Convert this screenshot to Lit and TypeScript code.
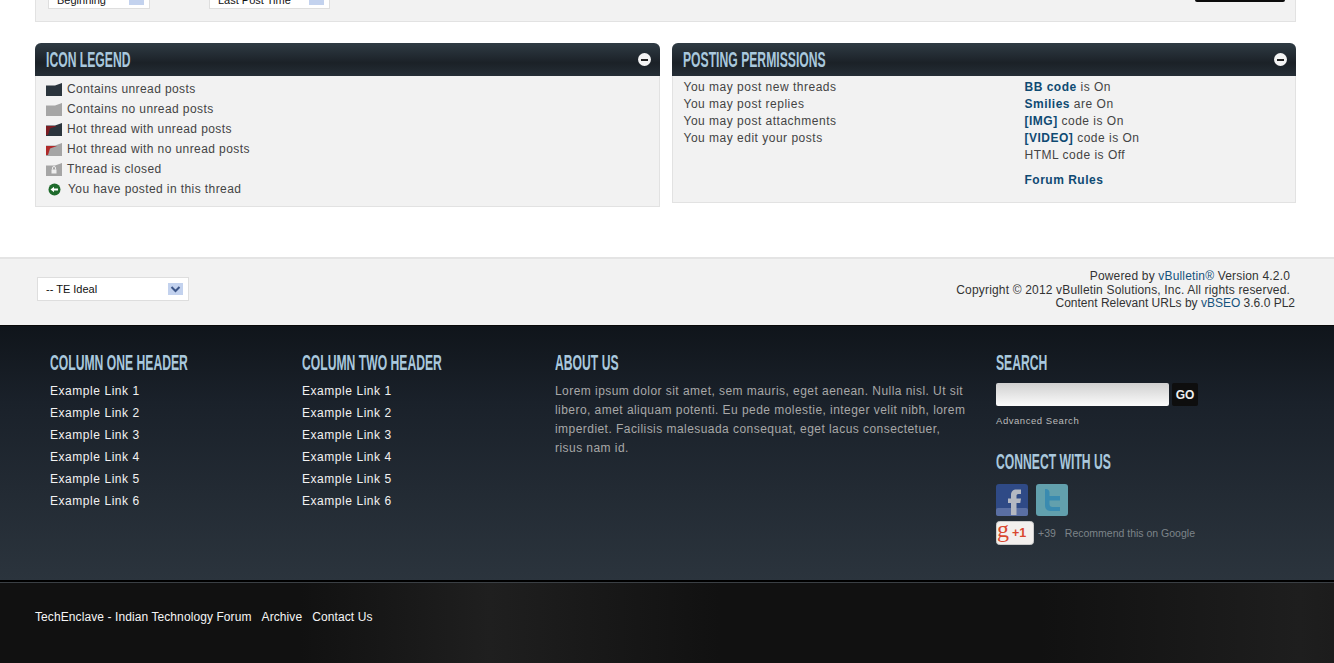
import { LitElement, html, css, svg } from "lit";
import { customElement } from "lit/decorators.js";

const folder = (body: string, hot: string, lock = false) => html`<svg class="fi" width="16" height="13" viewBox="0 0 16 13">
  <path d="M0 2.500H9L16 0V13H0Z" fill=${body}/>
  ${hot ? svg`<path d="M0 3H11L4 5.500 2 12H0Z" fill=${hot}/>` : ""}
  ${lock ? svg`<rect x="5.500" y="6.500" width="5" height="4" fill="#eee"/><path d="M6.500 6.500V5a1.500 1.500 0 0 1 3 0V6.500" fill="none" stroke="#eee" stroke-width="1"/>` : ""}
</svg>`;

@customElement("app-root")
export class AppRoot extends LitElement {
  static styles = css`
    :host { display: block; background: #fff; height: 663px; overflow: hidden; font-family: "Liberation Sans", Arial, sans-serif; font-size: 12px; color: #333; }
    a { text-decoration: none; }
    .top { margin: 0 38px 0 35px; height: 22px; box-sizing: border-box; background: #f2f2f2; border: 1px solid #e2e2e2; border-top: 0; position: relative; display: flex; overflow: hidden; padding-left: 12px; }
    .mini { height: 9px; background: #fff; border: 1px solid #dedede; border-top: 0; box-sizing: border-box; display: flex; justify-content: space-between; overflow: hidden; padding: 0 5px 0 8px; font-size: 11px; line-height: 1px; color: #111; }
    .mini.a { width: 102px; margin-right: 59px; }
    .mini.b { width: 121px; }
    .mini i { display: block; width: 15px; height: 5px; background: #c3d2ee; }
    .blk { position: absolute; right: 10px; top: 0; width: 90px; height: 2px; background: #0c0c0c; border-radius: 0 0 3px 3px; }
    .panels { display: flex; align-items: flex-start; gap: 12px; margin: 21px 38px 0 35px; }
    .panel { flex: 1; box-sizing: border-box; background: #f2f2f2; border: 1px solid #e2e2e2; border-top: 0; border-radius: 6px 6px 0 0; }
    .panel.l { height: 164px; }
    .panel.r { height: 160px; }
    .ph { margin: 0 -1px; height: 33px; display: flex; align-items: center; justify-content: space-between; padding: 0 9px 0 11px; background: linear-gradient(#2f3b44, #1b2127 60%, #252e36); border-radius: 6px 6px 0 0; }
    .h { display: inline-block; font-weight: 700; color: #a9c8dd; text-transform: uppercase; font-size: 22px; line-height: 24px; white-space: nowrap; transform: scaleX(0.553); transform-origin: left center; }
    .hw { display: block; height: 24px; overflow: visible; }
    .coll { width: 13px; height: 13px; border-radius: 50%; background: #f4f4f4; display: flex; align-items: center; justify-content: center; }
    .coll b { display: block; width: 7px; height: 2px; background: #222; }
    .leg { padding: 3px 10px; }
    .leg div { height: 20px; display: flex; align-items: center; gap: 5px; letter-spacing: 0.41px; color: #444; }
    .fi { flex: none; }
    .perm { display: grid; grid-template-columns: 341px 1fr; padding: 3px 11px; line-height: 17px; letter-spacing: 0.5px; color: #444; }
    .perm a { color: #0f4a72; font-weight: 700; }
    .rules { margin-top: 8px; }
    .band { margin-top: 50px; height: 68px; box-sizing: border-box; background: #f2f2f2; border-top: 2px solid #e4e4e4; display: flex; justify-content: space-between; padding: 11px 39px 0 37px; }
    .sel { margin-top: 7px; width: 152px; height: 24px; box-sizing: border-box; background: #fff; border: 1px solid #dedede; display: flex; align-items: center; justify-content: space-between; padding: 0 5px 0 8px; font-size: 11px; color: #111; }
    .sel svg { display: block; }
    .cr { text-align: right; color: #333; line-height: 13.5px; font-size: 12px; }
    .cr a { color: #15527c; }
    .cr .mid { padding-right: 5px; display: block; letter-spacing: 0.17px; }
    .dark { height: 255px; box-sizing: border-box; background: linear-gradient(#10151b, #1a212a 30%, #2b343d); border-top: 1px solid #0a0a0a; display: flex; padding: 25px 0 0 50px; color: #eee; }
    .c1 { width: 252px; }
    .c2 { width: 253px; }
    .c3 { width: 441px; }
    .hw.f { margin-bottom: 5px; }
    .lk { display: block; color: #f2f2f2; line-height: 22px; letter-spacing: 0.55px; }
    .about { color: #a8a8a8; line-height: 19px; margin: 0 0 0; padding-top: 2px; letter-spacing: 0.45px; width: 414px; }
    .srch { display: flex; gap: 3px; align-items: center; margin-top: 8px; }
    .inp { width: 173px; height: 23px; border-radius: 2px; background: linear-gradient(#d0d0d0, #fbfbfb); }
    .go { width: 26px; height: 23px; background: #0e0e0e; color: #eee; font-weight: 700; font-size: 12px; display: flex; align-items: center; justify-content: center; border-radius: 2px; }
    .adv { font-size: 9.500px; color: #bbb; letter-spacing: 0.55px; line-height: 12px; margin-top: 9px; display: block; }
    .hw.con { margin-top: 23px; margin-bottom: 10px; }
    .soc { display: flex; gap: 8px; }
    .soc svg { display: block; }
    .plus { display: flex; align-items: center; margin-top: 5px; color: #7d8489; font-size: 10.500px; }
    .plus svg { display: block; margin-right: 4px; overflow: visible; }
    .plus span + span { margin-left: 9px; }
    .bot { height: 83px; box-sizing: border-box; border-top: 2px solid #000; background: linear-gradient(90deg, #111 0, #111 300px, #1f1f1f 490px, #111 720px, #111 1040px, #1e1e1e 1300px, #1c1c1c 1334px); padding: 27px 35px; display: flex; gap: 10px; color: #f5f5f5; line-height: 16px; letter-spacing: 0.09px; box-shadow: inset 0 1px 0 #3a3f44; }
  `;

  private head(t: string, cls = "") {
    return html`<div class="hw ${cls}"><span class="h">${t}</span></div>`;
  }

  render() {
    const links = [1, 2, 3, 4, 5, 6].map((n) => html`<a class="lk" href="#">Example Link ${n}</a>`);
    return html`
      <div class="top">
        <div class="mini a"><span>Beginning</span><i></i></div>
        <div class="mini b"><span>Last Post Time</span><i></i></div>
        <div class="blk"></div>
      </div>
      <div class="panels">
        <section class="panel l">
          <div class="ph">${this.head("Icon Legend")}<span class="coll"><b></b></span></div>
          <div class="leg">
            <div>${folder("#2a343c", "")}Contains unread posts</div>
            <div>${folder("#a5a5a5", "")}Contains no unread posts</div>
            <div>${folder("#2a343c", "#7c1c22")}Hot thread with unread posts</div>
            <div>${folder("#a5a5a5", "#b02a2a")}Hot thread with no unread posts</div>
            <div>${folder("#a5a5a5", "", true)}Thread is closed</div>
            <div><svg class="fi" width="17" height="13" viewBox="0 0 17 13"><circle cx="8.500" cy="6.500" r="6" fill="#1f6b2c"/><path d="M4.500 6.500 8 3.700V5.500H12V7.500H8V9.300Z" fill="#fff"/></svg>You have posted in this thread</div>
          </div>
        </section>
        <section class="panel r">
          <div class="ph">${this.head("Posting Permissions")}<span class="coll"><b></b></span></div>
          <div class="perm">
            <div>You may post new threads<br />You may post replies<br />You may post attachments<br />You may edit your posts</div>
            <div>
              <a href="#">BB code</a> is On<br />
              <a href="#">Smilies</a> are On<br />
              <a href="#">[IMG]</a> code is On<br />
              <a href="#">[VIDEO]</a> code is On<br />
              HTML code is Off
              <div class="rules"><a href="#">Forum Rules</a></div>
            </div>
          </div>
        </section>
      </div>
      <div class="band">
        <div class="sel"><span>-- TE Ideal</span>
          <svg width="15" height="12" viewBox="0 0 15 12"><rect width="15" height="12" fill="#c3d2ee"/><path d="M3.500 4 7.500 8 11.500 4" fill="none" stroke="#3d5688" stroke-width="2"/></svg>
        </div>
        <div class="cr">
          <span class="mid">Powered by <a href="#">vBulletin®</a> Version 4.2.0</span>
          <span class="mid">Copyright © 2012 vBulletin Solutions, Inc. All rights reserved.</span>
          <span>Content Relevant URLs by <a href="#">vBSEO</a> 3.6.0 PL2</span>
        </div>
      </div>
      <div class="dark">
        <div class="c1">${this.head("Column One Header", "f")}${links}</div>
        <div class="c2">${this.head("Column Two Header", "f")}${links}</div>
        <div class="c3">${this.head("About Us", "f")}
          <p class="about">Lorem ipsum dolor sit amet, sem mauris, eget aenean. Nulla nisl. Ut sit libero, amet aliquam potenti. Eu pede molestie, integer velit nibh, lorem imperdiet. Facilisis malesuada consequat, eget lacus consectetuer, risus nam id.</p>
        </div>
        <div class="c4">${this.head("Search")}
          <div class="srch"><div class="inp"></div><div class="go">GO</div></div>
          <a class="adv" href="#">Advanced Search</a>
          ${this.head("Connect With Us", "con")}
          <div class="soc">
            <svg width="32" height="32" viewBox="0 0 32 32"><rect width="32" height="32" rx="3" fill="#2f4a86"/><rect x="0" y="24" width="32" height="8" rx="2" fill="#5a6fa3"/><path d="M15 31V19H12V14.500H15V11C15 7.500 17 5.500 20.500 5.500H25V10H22.500C21 10 20.500 10.800 20.500 12V14.500H25L24.300 19H20.500V31Z" fill="#b4b8c2"/></svg>
            <svg width="32" height="32" viewBox="0 0 32 32"><rect width="32" height="32" rx="3" fill="#62a0ad"/><path d="M9 5C11 5 13 5.500 13.500 8V12H24V16.500H13.500V20C13.500 22 14.500 23 16.500 23H24V27H14.500C11 27 9 25 9 21Z" fill="#3a8bb0"/></svg>
          </div>
          <div class="plus">
            <svg width="38" height="24" viewBox="0 0 38 24"><rect x=".5" y=".5" width="37" height="23" rx="3" fill="#f3f0ee" stroke="#ccc"/><text x="1" y="16" font-family="Liberation Serif" font-size="24" fill="#d9472f">g</text><text x="16" y="16" font-family="Liberation Sans" font-size="12.500" font-weight="700" fill="#d9472f">+1</text></svg>
            <span>+39</span><span>Recommend this on Google</span>
          </div>
        </div>
      </div>
      <div class="bot"><span>TechEnclave - Indian Technology Forum</span><span>Archive</span><span>Contact Us</span></div>
    `;
  }
}
